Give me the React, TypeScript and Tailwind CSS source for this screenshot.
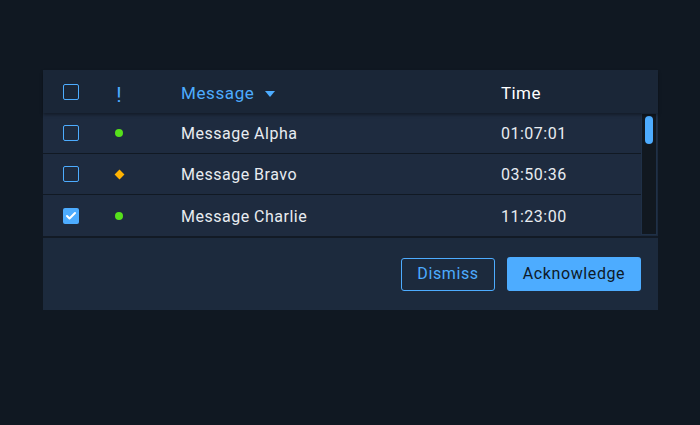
import { Check } from "lucide-react";

type Row = { id: string; name: string; time: string; level: "ok" | "warn"; checked: boolean };

const rows: Row[] = [
  { id: "a", name: "Message Alpha", time: "01:07:01", level: "ok", checked: false },
  { id: "b", name: "Message Bravo", time: "03:50:36", level: "warn", checked: false },
  { id: "c", name: "Message Charlie", time: "11:23:00", level: "ok", checked: true },
];

const Box = ({ checked }: { checked: boolean }) =>
  checked ? (
    <div className="w-4 h-4 rounded-[2px] bg-[#4dacff] flex items-center justify-center">
      <Check className="w-3 h-3 text-white" strokeWidth={4} />
    </div>
  ) : (
    <div className="w-4 h-4 rounded-[2px] border border-[#4dacff]" />
  );

const Indicator = ({ level }: { level: Row["level"] }) =>
  level === "ok" ? (
    <div className="w-2 h-2 rounded-full bg-[#56e01b]" />
  ) : (
    <div className="w-[7px] h-[7px] rotate-45 bg-[#ffb302]" />
  );

export default function App() {
  return (
    <div
      className="w-[700px] h-[425px] bg-[#101822] pt-[70px] pl-[43px]"
      style={{ fontFamily: "Roboto, 'Liberation Sans', sans-serif" }}
    >
      <div className="w-[615px] bg-[#1c2a3d]">
        {/* header */}
        <div className="h-[43px] flex items-center pl-5 bg-[#1a2637] shadow-[0_2px_3px_rgba(0,0,0,0.35)] relative z-10">
          <Box checked={false} />
          <div className="w-20 flex justify-center text-[#4dacff] text-[21px] leading-none pt-[7px]">!</div>
          <div className="ml-[22px] w-[320px] flex items-center gap-[10px] text-[17px] text-[#4dacff] tracking-[0.6px] pt-[5px]">
            Message
            <svg width="10" height="6" viewBox="0 0 10 6" className="ml-[1px]">
              <path d="M0 0 L10 0 L5 6 Z" fill="#4dacff" />
            </svg>
          </div>
          <div className="text-[17px] text-white tracking-[0.4px] pt-[5px]">Time</div>
        </div>

        {/* rows + scrollbar */}
        <div className="flex">
          <div className="w-[598px]">
            {rows.map((r) => (
              <div
                key={r.id}
                className="h-[41px] flex items-center pl-5 border-b border-[#111923] bg-[#1e2b3f] last:border-b-0"
              >
                <Box checked={r.checked} />
                <div className="w-20 flex justify-center">
                  <Indicator level={r.level} />
                </div>
                <div className="ml-[22px] w-[320px] text-[16px] text-[#e8ecf1] tracking-[0.5px] pt-[2px]">{r.name}</div>
                <div className="text-[16px] text-[#e8ecf1] tracking-[0.5px] pt-[2px]">{r.time}</div>
              </div>
            ))}
          </div>
          <div className="w-[16px] h-[122px] bg-[#111820] border border-[#1f3047] flex justify-center pt-[2px]">
            <div className="w-2 h-[28px] rounded-full bg-[#4dacff]" />
          </div>
        </div>

        {/* footer */}
        <div className="h-[74px] border-t-2 border-[#121a25] bg-[#1c2a3d] flex items-center justify-end gap-3 pr-[17px]">
          <button className="h-[33px] w-[94px] border border-[#4dacff] rounded-[3px] text-[#4dacff] text-[16px] tracking-[0.6px]">
            Dismiss
          </button>
          <button className="h-[34px] w-[134px] bg-[#4dacff] rounded-[3px] text-[#0e1a28] text-[16px] tracking-[0.6px]">
            Acknowledge
          </button>
        </div>
      </div>
    </div>
  );
}
